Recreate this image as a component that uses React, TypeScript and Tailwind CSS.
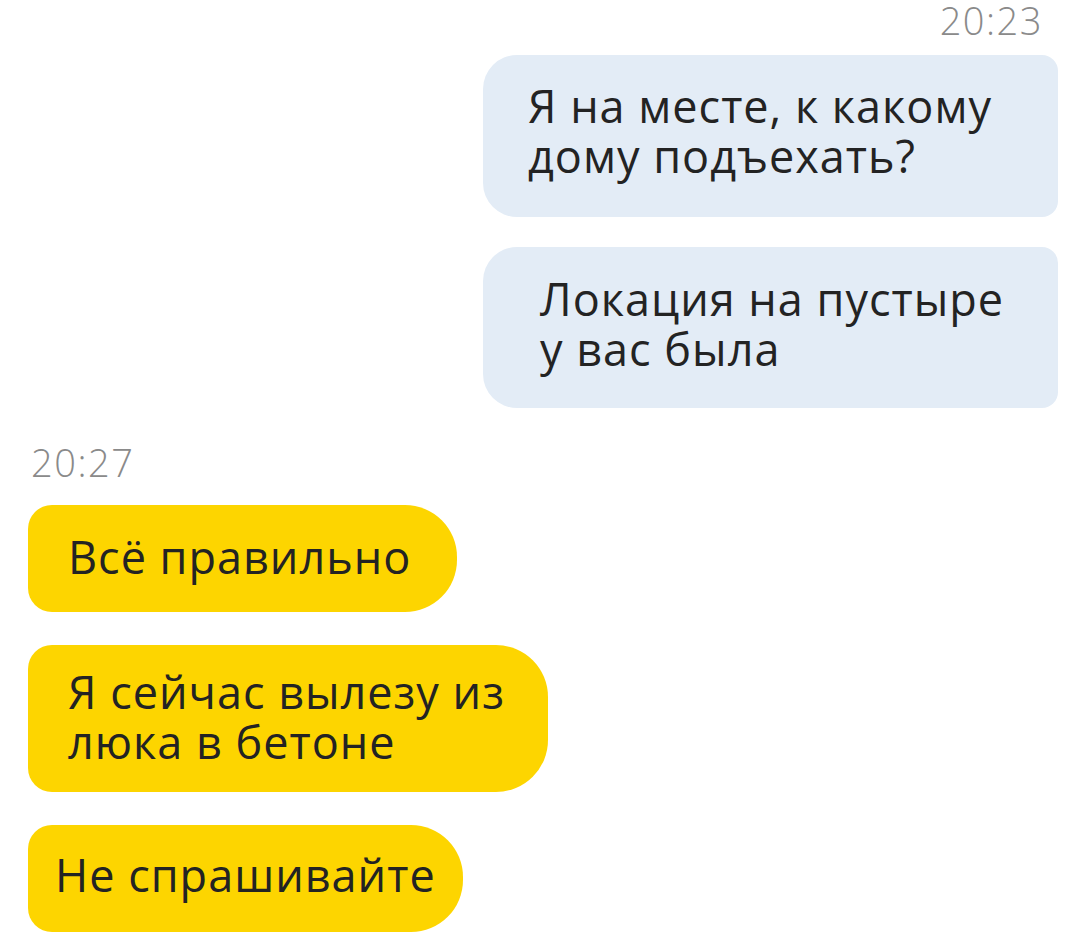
const FONT = { fontFamily: '"Open Sans", "Noto Sans", sans-serif' }

type Msg = { id: number; lines: string[]; boxCls: string }

// outgoing (blue) messages
const OUT: Msg[] = [
  { id: 1, lines: ['Я на месте, к какому', 'дому подъехать?'], boxCls: 'w-[575px] pl-[45px] pt-[26px] pb-[36px]' },
  { id: 2, lines: ['Локация на пустыре', 'у вас была'], boxCls: 'w-[575px] pl-[57px] pt-[27px] pb-[34px]' },
]

// incoming (yellow) messages
const IN: Msg[] = [
  { id: 3, lines: ['Всё правильно'], boxCls: 'w-[429px] pl-[40px] pt-[27px] pb-[30px]' },
  { id: 4, lines: ['Я сейчас вылезу из', 'люка в бетоне'], boxCls: 'w-[520px] pl-[40px] pt-[22px] pb-[25px]' },
  { id: 5, lines: ['Не спрашивайте'], boxCls: 'w-[435px] pl-[27px] pt-[25px] pb-[32px]' },
]

function Bubble({ msg, side }: { msg: Msg; side: 'out' | 'in' }) {
  const base = side === 'out'
    ? 'bg-[#e3ecf6] rounded-l-[34px] rounded-r-[16px]'
    : 'bg-[#fdd500] rounded-l-[24px] rounded-r-[52px]'
  return (
    <div className={`${base} ${msg.boxCls} text-[45px] leading-[50px] font-medium text-[#232323] tracking-[1px]`}>
      {msg.lines.map((l) => (
        <div key={l} className="whitespace-nowrap">{l}</div>
      ))}
    </div>
  )
}

export default function App() {
  return (
    <div className="w-[1080px] h-[939px] bg-white overflow-hidden" style={FONT}>
      <div className="flex flex-col">
        {/* outgoing block */}
        <div className="flex flex-col items-end pr-[22px]">
          <div className="pr-[15px] h-[55px] text-[38px] leading-[40px] tracking-[1.5px] text-[#8a8a8a] font-light">20:23</div>
          <div className="flex flex-col items-end gap-[30px]">
            {OUT.map((m) => <Bubble key={m.id} msg={m} side="out" />)}
          </div>
        </div>

        {/* incoming block */}
        <div className="flex flex-col items-start pl-[28px] pt-[34px]">
          <div className="pl-[3px] h-[63px] text-[38px] leading-[40px] tracking-[1.5px] text-[#8a8a8a] font-light">20:27</div>
          <div className="flex flex-col items-start gap-[33px]">
            {IN.map((m) => <Bubble key={m.id} msg={m} side="in" />)}
          </div>
        </div>
      </div>
    </div>
  )
}
